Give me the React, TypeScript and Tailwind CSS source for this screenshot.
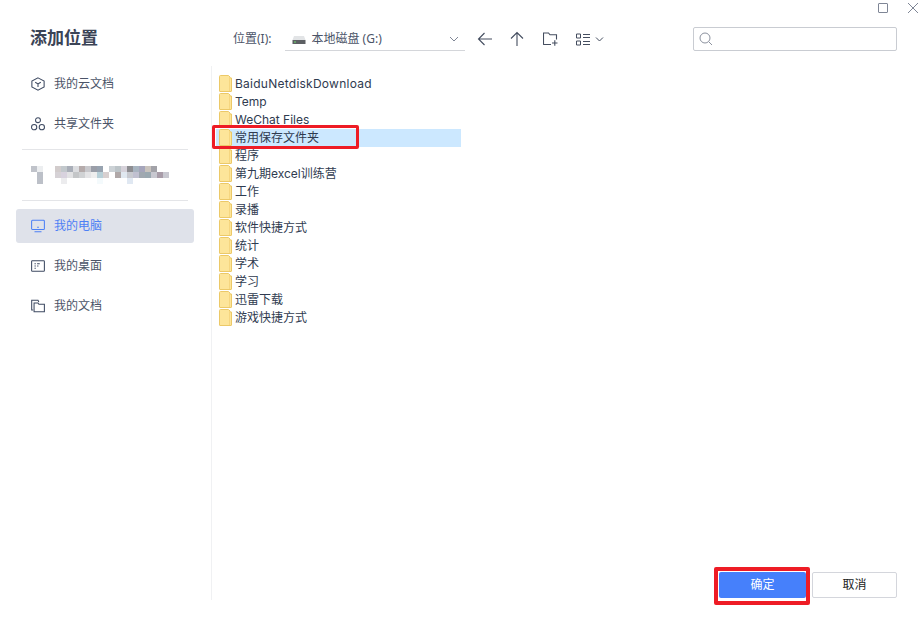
const folders = [
  "BaiduNetdiskDownload",
  "Temp",
  "WeChat Files",
  "常用保存文件夹",
  "程序",
  "第九期excel训练营",
  "工作",
  "录播",
  "软件快捷方式",
  "统计",
  "学术",
  "学习",
  "迅雷下载",
  "游戏快捷方式",
];

// blurred account name, one entry per 6px cell
const mosaic: [number, number, string][] = [
  [0, 0, "#c0c3ca"], [1, 0, "#eceef0"], [1, 1, "#bcc0c8"], [1, 2, "#bcc0c8"],
  ...["#d2cccc", "#c2c8cc", "#a9aeb8", "#dcdde0", "#b5abab", "#c8c8cc", "#9a9ea8", "#98a3b0", "", "#ccd2d6", "#bcc4c8", "#d6d2da", "#8e8e92", "#a8b4c0", "#a5a5bb", "#c9c3bd", "#a2a2a8"].map(
    (c, i) => [i + 4, 0, c] as [number, number, string],
  ),
  ...["#d6d2d6", "#d8d2de", "#e2e2e4", "#c4c6c8", "#d0d2d4", "#e4e4e6", "#eeeeee", "#b8d0d8", "#d8d0d0", "", "#b0a8a8", "#e0e8f0", "#c8cad0", "#c0c0d0", "#a0a8b0", "#9aa8b0", "#c8c8d0", "#a89ca8", "#c8c8d0"].map(
    (c, i) => [i + 4, 1, c] as [number, number, string],
  ),
  [5, 2, "#ececee"], [11, 2, "#f4fafc"], [16, 2, "#e0e8f2"],
];

function Mosaic() {
  return (
    <svg width="138" height="18" viewBox="0 0 138 18">
      {mosaic.map(([x, y, c]) =>
        c ? <rect key={`${x}-${y}`} x={x * 6} y={y * 6} width="6" height="6" fill={c} /> : null,
      )}
    </svg>
  );
}

function FolderIcon() {
  return (
    <svg width="13" height="17" viewBox="0 0 13 17" className="mb-[1px] shrink-0">
      <path d="M0.5 1.5 Q0.5 0.5 1.5 0.5 H9.5 L11 2 V3 H12.5 V16 Q12.5 16.5 12 16.5 H1 Q0.5 16.5 0.5 16 Z" fill="#fde59a" stroke="#ecc968" />
      <path d="M10.5 2.5 V16" stroke="#f6d680" fill="none" />
    </svg>
  );
}

function NavIcon({ name, color }: { name: string; color: string }) {
  const common = { fill: "none", stroke: color, strokeWidth: 1.2 };
  return (
    <svg width="14" height="14" viewBox="0 0 16 16" className="shrink-0">
      {name === "cube" && (
        <g {...common}>
          <path d="M8 1 L15 4.6 V11.4 L8 15 L1 11.4 V4.6 Z" />
          <path d="M4.8 6 L8 8 L11.2 6 M8 8 V11.5" />
        </g>
      )}
      {name === "share" && (
        <g {...common}>
          <circle cx="8" cy="3.6" r="2.8" />
          <circle cx="3.6" cy="11.6" r="3" />
          <circle cx="12.4" cy="11.6" r="3" />
        </g>
      )}
      {name === "pc" && (
        <g {...common}>
          <rect x="0.7" y="1.5" width="14.6" height="10.5" rx="1" />
          <path d="M4 14.5 H12 M7 9.5 H9" />
        </g>
      )}
      {name === "desk" && (
        <g {...common}>
          <rect x="0.7" y="2" width="14.6" height="12" rx="0.8" />
          <path d="M4 5.5 H5.5 M7 5.5 H10 M4 8 H5.5 M7 8 H8.5 M4 10.5 H5.5" />
        </g>
      )}
      {name === "docs" && (
        <g {...common}>
          <path d="M2.5 12.5 H0.8 V1.5 H8 L9 3.5" />
          <path d="M3.5 14.5 V4.5 H8 L9 6 H15.3 V14.5 Z" />
        </g>
      )}
    </svg>
  );
}

function NavItem({ icon, label, active }: { icon: string; label: string; active?: boolean }) {
  return (
    <div
      className={
        "flex h-[34px] items-center gap-[9px] rounded-[3px] pl-[15px] text-[12px] " +
        (active ? "bg-[#dfe2ea] text-[#4d80f5]" : "text-[#4b5468]")
      }
    >
      <NavIcon name={icon} color={active ? "#4d80f5" : "#3e4a62"} />
      <span>{label}</span>
    </div>
  );
}

export default function App() {
  return (
    <div
      className="relative flex h-[623px] w-[922px] overflow-hidden bg-white text-[#333]"
      style={{ fontFamily: '"Noto Sans", "Noto Sans CJK SC", sans-serif' }}
    >
      <aside className="flex w-[212px] shrink-0 flex-col">
        <h1 className="ml-[30px] mt-[26px] h-[24px] text-[17px] font-bold leading-[24px] text-[#3b4456]">添加位置</h1>
        <div className="mt-[16px] flex h-[534px] flex-col border-r border-[#f0f1f3] pl-[16px] pr-[17px]">
          <div className="mt-[1px] flex flex-col gap-[6px]">
            <NavItem icon="cube" label="我的云文档" />
            <NavItem icon="share" label="共享文件夹" />
          </div>
          <div className="mx-[6px] mt-[8px] border-t border-[#e4e5e8]" />
          <div className="flex h-[50px] items-center pl-[15px]">
            <Mosaic />
          </div>
          <div className="mx-[6px] border-t border-[#e4e5e8]" />
          <div className="mt-[8px] flex flex-col gap-[6px]">
            <NavItem icon="pc" label="我的电脑" active />
            <NavItem icon="desk" label="我的桌面" />
            <NavItem icon="docs" label="我的文档" />
          </div>
        </div>
      </aside>

      <main className="flex min-w-0 flex-1 flex-col">
        <div className="flex h-[27px] items-start justify-end gap-[20px] pr-[4px] pt-[3px]">
          <div className="h-[10px] w-[10px] rounded-[1px] border border-[#7f8696]" />
          <svg width="10" height="10" viewBox="0 0 10 10">
            <path d="M0 0 L10 10 M10 0 L0 10" stroke="#7f8696" strokeWidth="1" />
          </svg>
        </div>

        <div className="flex h-[24px] items-center pr-[25px]">
          <span className="ml-[21px] text-[12px] text-[#4b5468]">位置(I):</span>
          <div className="ml-[14px] flex h-[24px] w-[180px] items-center border-b border-[#d4d6da] pl-[7px] pr-[6px] text-[12px] text-[#4b5468]">
            <svg width="14" height="10" viewBox="0 0 14 10" className="mr-[5px] mt-[3px] shrink-0">
              <path d="M2 1 H12 L13.5 5 H0.5 Z" fill="#e2e4e6" />
              <rect x="0.5" y="5" width="13" height="4" fill="#5c5f63" />
              <rect x="2" y="6.5" width="2" height="1" fill="#6ddb6d" />
            </svg>
            <span className="flex-1">本地磁盘 (G:)</span>
            <svg width="10" height="6" viewBox="0 0 10 6">
              <path d="M1 1 L5 5 L9 1" fill="none" stroke="#7f8696" strokeWidth="1" />
            </svg>
          </div>
          <svg width="16" height="14" viewBox="0 0 16 14" className="ml-[12px]">
            <path d="M15 7 H2 M7.5 1 L1.5 7 L7.5 13" fill="none" stroke="#444d5f" strokeWidth="1.1" />
          </svg>
          <svg width="14" height="16" viewBox="0 0 14 16" className="ml-[17px]">
            <path d="M7 15 V2 M1 7.5 L7 1.5 L13 7.5" fill="none" stroke="#444d5f" strokeWidth="1.1" />
          </svg>
          <svg width="15" height="14" viewBox="0 0 15 14" className="ml-[19px]">
            <path d="M8 12.5 H1 Q0.5 12.5 0.5 12 V1 H5.5 L7 2.8 H13.5 V7.5 M9 11 H14.5 M11.8 8.2 V13.8" fill="none" stroke="#444d5f" strokeWidth="1.1" />
          </svg>
          <svg width="28" height="13" viewBox="0 0 28 13" className="ml-[18px]">
            <path d="M0.5 1 H4.5 V5 H0.5 Z M0.5 8 H4.5 V12 H0.5 Z M7 1.5 H14 M7 4.5 H14 M7 8.5 H14 M7 11.5 H14 M20 4.5 L23.5 8 L27 4.5" fill="none" stroke="#444d5f" strokeWidth="1" />
          </svg>
          <div className="ml-auto flex h-[24px] w-[204px] items-center rounded-[2px] border border-[#c9ccd2] pl-[5px]">
            <svg width="14" height="14" viewBox="0 0 14 14">
              <circle cx="6" cy="6" r="5" fill="none" stroke="#8b919e" strokeWidth="1" />
              <path d="M9.8 9.8 L13 13" stroke="#8b919e" strokeWidth="1" />
            </svg>
          </div>
        </div>

        <ul
          className="ml-[4px] mt-[24px] w-[245px] flex-1"
          style={{ fontFamily: 'Inter, "Noto Sans CJK SC", sans-serif' }}
        >
          {folders.map((name, i) => (
            <li
              key={name}
              className={"flex h-[18px] items-center gap-[3px] pl-[3px] text-[12px] text-[#2f3b50] " + (i === 3 ? "bg-[#cce8ff]" : "")}
            >
              <FolderIcon />
              <span className={"mb-[1px] leading-[18px] " + (i === 0 ? "tracking-[0.25px]" : "")}>{name}</span>
            </li>
          ))}
        </ul>

        <div className="mb-[25px] flex justify-end gap-[6px] pr-[25px]">
          <button className="h-[26px] w-[87px] rounded-[2px] bg-[#4680fb] text-[12px] text-white">确定</button>
          <button className="h-[26px] w-[85px] rounded-[2px] border border-[#d4d6dc] text-[12px] text-[#222]">取消</button>
        </div>
      </main>

      {/* annotation boxes drawn on top of the screenshot */}
      <div className="absolute left-[212px] top-[125px] h-[24px] w-[147px] rounded-[2px] border-[3px] border-[#ee1c25]" />
      <div className="absolute left-[714px] top-[567px] h-[38px] w-[96px] rounded-[2px] border-[4px] border-[#ee1c25]" />
    </div>
  );
}
